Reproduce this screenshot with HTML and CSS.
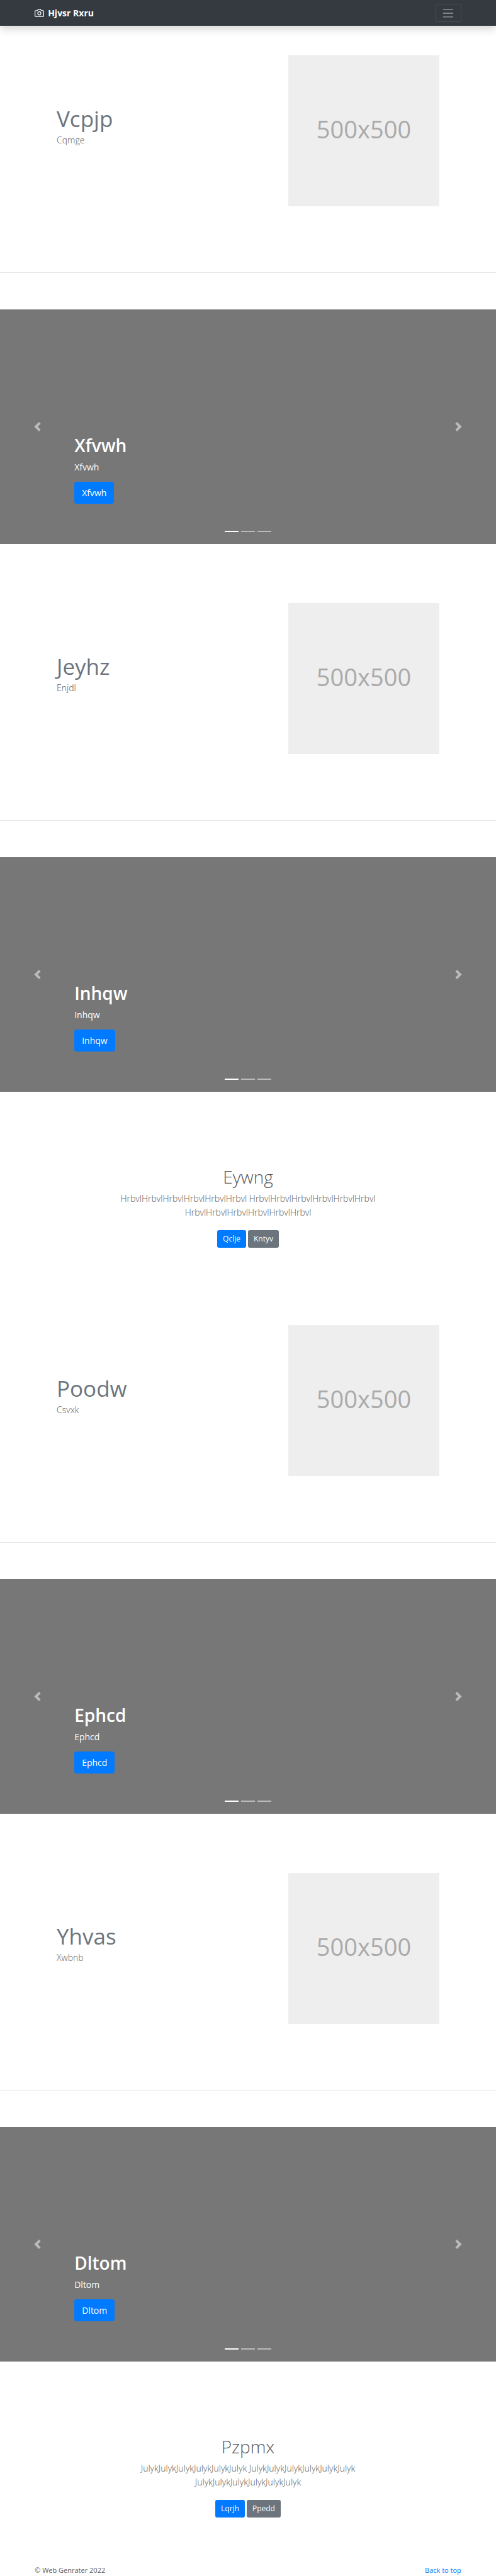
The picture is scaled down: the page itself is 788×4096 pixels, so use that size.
FILE: index.html
```
<!DOCTYPE html>
<html lang="en">
<head>
<meta charset="utf-8">
<meta name="viewport" content="width=device-width, initial-scale=1">
<title>Hjvsr Rxru</title>
<link rel="stylesheet" href="styles.css">
</head>
<body id="top">
<svg class="sprite" aria-hidden="true">
  <symbol id="prev" viewBox="0 0 8 8"><path d="M5.25 0l-4 4 4 4 1.5-1.5L4.25 4l2.5-2.5L5.25 0z"/></symbol>
  <symbol id="next" viewBox="0 0 8 8"><path d="M2.75 0l-1.5 1.5L3.75 4l-2.5 2.5L2.75 8l4-4-4-4z"/></symbol>
</svg>
<header class="navbar">
  <a class="brand" href="#top">
    <svg class="brand-icon" viewBox="0 0 24 24" aria-hidden="true"><path d="M23 19a2 2 0 0 1-2 2H3a2 2 0 0 1-2-2V8a2 2 0 0 1 2-2h4l2-3h6l2 3h4a2 2 0 0 1 2 2z"/><circle cx="12" cy="13" r="4"/></svg>
    <strong>Hjvsr Rxru</strong>
  </a>
  <button class="toggler" type="button" aria-label="Toggle navigation">
    <svg class="toggler-icon" viewBox="0 0 30 30" aria-hidden="true"><path d="M4 7h22M4 15h22M4 23h22"/></svg>
  </button>
</header>
<main>
  <section class="feature feature-first">
    <div class="feature-text"><h2>Vcpjp</h2><p>Cqmge</p></div>
    <div class="thumb">500x500</div>
  </section>
  <hr class="divider">
  <section class="carousel">
    <button class="control" type="button" aria-label="Previous"><svg class="control-icon"><use href="#prev"/></svg></button>
    <div class="caption"><h1>Xfvwh</h1><p>Xfvwh</p><a class="btn btn-primary btn-lg" href="#top">Xfvwh</a></div>
    <button class="control" type="button" aria-label="Next"><svg class="control-icon"><use href="#next"/></svg></button>
    <ol class="indicators"><li class="active"></li><li></li><li></li></ol>
  </section>

  <section class="feature">
    <div class="feature-text"><h2>Jeyhz</h2><p>Enjdl</p></div>
    <div class="thumb">500x500</div>
  </section>
  <hr class="divider">
  <section class="carousel">
    <button class="control" type="button" aria-label="Previous"><svg class="control-icon"><use href="#prev"/></svg></button>
    <div class="caption"><h1>Inhqw</h1><p>Inhqw</p><a class="btn btn-primary btn-lg" href="#top">Inhqw</a></div>
    <button class="control" type="button" aria-label="Next"><svg class="control-icon"><use href="#next"/></svg></button>
    <ol class="indicators"><li class="active"></li><li></li><li></li></ol>
  </section>

  <section class="intro">
    <h2>Eywng</h2>
    <p>HrbvlHrbvlHrbvlHrbvlHrbvlHrbvl HrbvlHrbvlHrbvlHrbvlHrbvlHrbvl HrbvlHrbvlHrbvlHrbvlHrbvlHrbvl</p>
    <div class="actions"><a class="btn btn-primary" href="#top">Qclje</a><a class="btn btn-secondary" href="#top">Kntyv</a></div>
  </section>

  <section class="feature">
    <div class="feature-text"><h2>Poodw</h2><p>Csvxk</p></div>
    <div class="thumb">500x500</div>
  </section>
  <hr class="divider">
  <section class="carousel">
    <button class="control" type="button" aria-label="Previous"><svg class="control-icon"><use href="#prev"/></svg></button>
    <div class="caption"><h1>Ephcd</h1><p>Ephcd</p><a class="btn btn-primary btn-lg" href="#top">Ephcd</a></div>
    <button class="control" type="button" aria-label="Next"><svg class="control-icon"><use href="#next"/></svg></button>
    <ol class="indicators"><li class="active"></li><li></li><li></li></ol>
  </section>

  <section class="feature">
    <div class="feature-text"><h2>Yhvas</h2><p>Xwbnb</p></div>
    <div class="thumb">500x500</div>
  </section>
  <hr class="divider">
  <section class="carousel">
    <button class="control" type="button" aria-label="Previous"><svg class="control-icon"><use href="#prev"/></svg></button>
    <div class="caption"><h1>Dltom</h1><p>Dltom</p><a class="btn btn-primary btn-lg" href="#top">Dltom</a></div>
    <button class="control" type="button" aria-label="Next"><svg class="control-icon"><use href="#next"/></svg></button>
    <ol class="indicators"><li class="active"></li><li></li><li></li></ol>
  </section>

  <section class="intro">
    <h2>Pzpmx</h2>
    <p>JulykJulykJulykJulykJulykJulyk JulykJulykJulykJulykJulykJulyk JulykJulykJulykJulykJulykJulyk</p>
    <div class="actions"><a class="btn btn-primary" href="#top">Lqrjh</a><a class="btn btn-secondary" href="#top">Ppedd</a></div>
  </section>
</main>
<footer class="footer">
  <span>© Web Genrater 2022</span>
  <a href="#top">Back to top</a>
</footer>
</body>
</html>
```

FILE: styles.css
```
* { box-sizing: border-box; }

body {
  margin: 0;
  background: #fff;
  color: #5a5a5a;
  font-family: "Open Sans", "Noto Sans", sans-serif;
  font-size: 11px;
  line-height: 18px;
}

h1, h2, p, ol { margin: 0; padding: 0; }

a { color: #007bff; text-decoration: none; }

.sprite { display: none; }

.navbar {
  display: flex;
  align-items: center;
  justify-content: space-between;
  height: 41px;
  padding: 0 7%;
  background: #343a40;
  box-shadow: 0 6px 12px rgba(0, 0, 0, 0.15);
}

.brand {
  display: flex;
  align-items: center;
  gap: 6px;
  color: #fff;
  font-size: 14px;
}

.brand-icon {
  width: 15px;
  height: 15px;
  fill: none;
  stroke: #fff;
  stroke-width: 2;
  stroke-linecap: round;
  stroke-linejoin: round;
}

.toggler {
  display: flex;
  align-items: center;
  justify-content: center;
  width: 41px;
  height: 29px;
  padding: 0;
  border: 1px solid rgba(255, 255, 255, 0.1);
  border-radius: 3px;
  background: none;
}

.toggler-icon {
  width: 22px;
  height: 22px;
  fill: none;
  stroke: rgba(255, 255, 255, 0.5);
  stroke-width: 2;
}

.feature {
  display: flex;
  align-items: flex-start;
  justify-content: space-between;
  padding: 94px 90px 105px;
}

.feature-first { padding-top: 47px; }

.feature-text { padding-top: 79px; }

.feature-text h2 {
  margin-bottom: 1px;
  color: #6c757d;
  font-size: 35px;
  font-weight: 400;
  line-height: 44px;
}

.feature-text p {
  font-size: 14px;
  font-weight: 300;
  line-height: 22px;
}

.thumb {
  display: flex;
  align-items: center;
  justify-content: center;
  width: 240px;
  height: 240px;
  padding-bottom: 6px;
  background: #eee;
  color: #aaa;
  font-size: 38px;
  line-height: 50px;
}

.divider {
  height: 1px;
  margin: 0 0 58px;
  border: 0;
  background: #e5e5e5;
}

.carousel {
  position: relative;
  display: flex;
  height: 373px;
  background: #777;
  color: #fff;
}

.control {
  display: flex;
  align-items: center;
  justify-content: center;
  width: 15%;
  padding: 0;
  border: 0;
  background: none;
  opacity: 0.5;
}

.control-icon { width: 15px; height: 15px; fill: #fff; }

.caption {
  flex: 1;
  display: flex;
  flex-direction: column;
  align-items: flex-start;
  justify-content: flex-end;
  padding-bottom: 64px;
}

.caption h1 {
  margin-bottom: 6px;
  font-size: 28px;
  font-weight: 600;
  line-height: 35px;
}

.caption p {
  margin-bottom: 12px;
  font-size: 14px;
  line-height: 22px;
}

.indicators {
  position: absolute;
  right: 0;
  bottom: 19px;
  left: 0;
  display: flex;
  justify-content: center;
  gap: 4px;
  list-style: none;
}

.indicators li {
  width: 22px;
  height: 2px;
  background: #fff;
  opacity: 0.5;
}

.indicators .active { opacity: 1; }

.btn {
  display: block;
  padding: 5px 9px;
  border-radius: 3px;
  color: #fff;
  font-size: 12px;
  line-height: 18px;
}

.btn-lg {
  padding: 7px 12px;
  border-radius: 4px;
  font-size: 14px;
  line-height: 21px;
}

.btn-primary { background: #007bff; }

.btn-secondary { background: #6c757d; }

.intro {
  display: flex;
  flex-direction: column;
  align-items: center;
  padding: 118px 22% 29px;
  text-align: center;
}

.intro h2 {
  margin-bottom: 6px;
  font-size: 28px;
  font-weight: 300;
  line-height: 35px;
}

.intro p {
  margin-bottom: 17px;
  font-size: 14px;
  font-weight: 300;
  line-height: 22px;
}

.actions { display: flex; gap: 3px; }

.footer {
  display: flex;
  justify-content: space-between;
  padding: 46px 7% 0;
}
```
